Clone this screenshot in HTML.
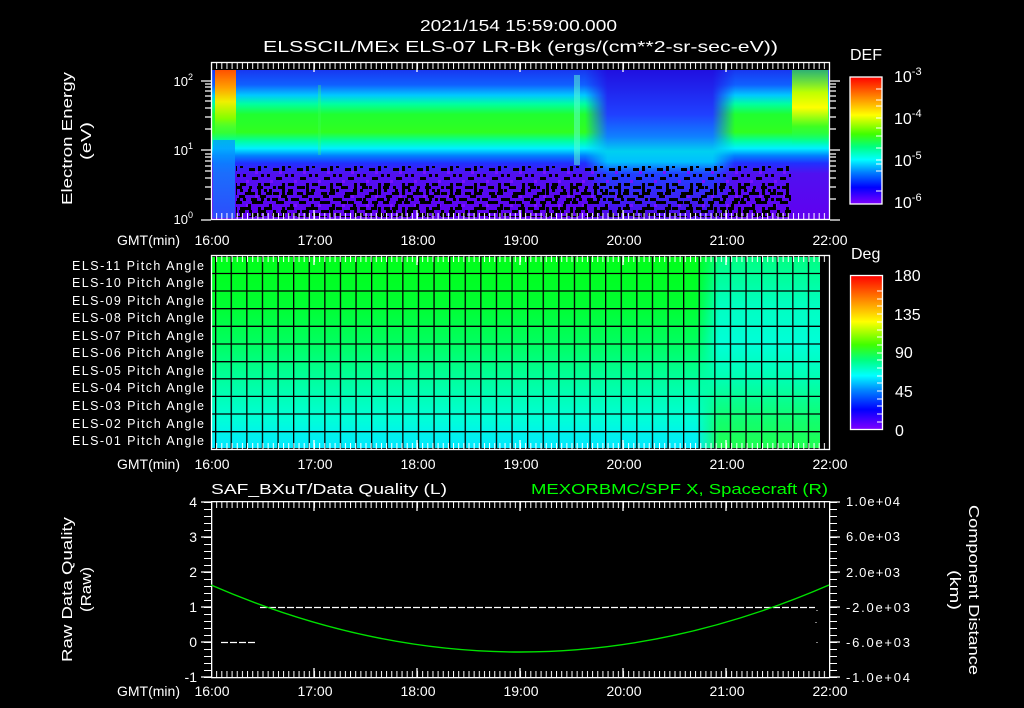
<!DOCTYPE html>
<html><head><meta charset="utf-8"><style>
html,body{margin:0;padding:0;background:#000;width:1024px;height:708px;overflow:hidden}
svg{display:block}
text{font-family:"Liberation Sans",sans-serif;fill:#fff}
</style></head><body>
<svg width="1024" height="708" viewBox="0 0 1024 708" xmlns="http://www.w3.org/2000/svg">
<defs>
<linearGradient id="cb" x1="0" y1="0" x2="0" y2="1">
<stop offset="0" stop-color="#ff0000"/><stop offset=".15" stop-color="#ff8000"/><stop offset=".3" stop-color="#ffff00"/><stop offset=".45" stop-color="#40ff00"/><stop offset=".55" stop-color="#00ff80"/><stop offset=".65" stop-color="#00ffff"/><stop offset=".75" stop-color="#0080ff"/><stop offset=".87" stop-color="#0000ff"/><stop offset="1" stop-color="#8000ff"/></linearGradient>
<linearGradient id="spec" x1="0" y1="70" x2="0" y2="218" gradientUnits="userSpaceOnUse">
<stop offset="0" stop-color="#1838f0"/><stop offset=".1" stop-color="#1060ff"/><stop offset=".17" stop-color="#00c8ff"/><stop offset=".23" stop-color="#00ffa0"/><stop offset=".3" stop-color="#20ff30"/><stop offset=".42" stop-color="#30ff20"/><stop offset=".48" stop-color="#00ffa0"/><stop offset=".53" stop-color="#00f0ff"/><stop offset=".58" stop-color="#0080ff"/><stop offset=".63" stop-color="#2030ff"/><stop offset=".7" stop-color="#5010f0"/><stop offset="1" stop-color="#6000f0"/></linearGradient>
<linearGradient id="weak" x1="0" y1="70" x2="0" y2="218" gradientUnits="userSpaceOnUse">
<stop offset="0" stop-color="#2010e0"/><stop offset=".3" stop-color="#2040ff"/><stop offset=".45" stop-color="#1080ff"/><stop offset=".55" stop-color="#00d0f0"/><stop offset=".62" stop-color="#00c0ff"/><stop offset=".7" stop-color="#2040ff"/><stop offset="1" stop-color="#5008e8"/></linearGradient>
<linearGradient id="hx" x1="0" y1="0" x2="1" y2="0"><stop offset="0" stop-color="#fff" stop-opacity="0"/><stop offset=".15" stop-color="#fff" stop-opacity="1"/><stop offset=".85" stop-color="#fff" stop-opacity="1"/><stop offset="1" stop-color="#fff" stop-opacity="0"/></linearGradient>
<mask id="wm"><rect x="585" y="70" width="150" height="150" fill="url(#hx)"/></mask>
<linearGradient id="hot" x1="0" y1="70" x2="0" y2="140" gradientUnits="userSpaceOnUse">
<stop offset="0" stop-color="#ff5000"/><stop offset=".25" stop-color="#ffa000"/><stop offset=".45" stop-color="#f0f000"/><stop offset=".7" stop-color="#80ff00"/><stop offset="1" stop-color="#20ff80" stop-opacity="0"/></linearGradient>
<linearGradient id="rhot" x1="0" y1="70" x2="0" y2="145" gradientUnits="userSpaceOnUse">
<stop offset="0" stop-color="#40ff20" stop-opacity=".6"/><stop offset=".3" stop-color="#c0ff00"/><stop offset=".5" stop-color="#ffff00"/><stop offset=".75" stop-color="#40ff20"/><stop offset="1" stop-color="#00ff90" stop-opacity="0"/></linearGradient>
<linearGradient id="lstrip" x1="0" y1="140" x2="0" y2="218" gradientUnits="userSpaceOnUse"><stop offset="0" stop-color="#00a0ff"/><stop offset="1" stop-color="#2060ff"/></linearGradient>
<pattern id="speck" width="24" height="24" patternUnits="userSpaceOnUse" x="0" y="165">
<g fill="#000"><rect x="0" y="0" width="3" height="3"/><rect x="9" y="3" width="6" height="3"/><rect x="18" y="0" width="3" height="6"/><rect x="3" y="9" width="3" height="3"/><rect x="12" y="12" width="6" height="3"/><rect x="21" y="9" width="3" height="3"/><rect x="0" y="18" width="6" height="3"/><rect x="9" y="21" width="3" height="3"/><rect x="18" y="18" width="3" height="6"/></g>
<g fill="#7a10ff"><rect x="6" y="15" width="3" height="3"/><rect x="15" y="6" width="3" height="3"/></g>
</pattern>
<pattern id="speck2" width="21" height="15" patternUnits="userSpaceOnUse" x="5" y="186">
<g fill="#000"><rect x="0" y="0" width="6" height="3"/><rect x="12" y="3" width="3" height="6"/><rect x="3" y="9" width="6" height="3"/><rect x="15" y="12" width="6" height="3"/><rect x="9" y="6" width="3" height="3"/></g>
</pattern>
<pattern id="tk" width="5.15" height="20" patternUnits="userSpaceOnUse" x="211" y="0"><rect x="0" y="0" width="1" height="20" fill="#fff"/></pattern>
<pattern id="tky" width="20" height="7" patternUnits="userSpaceOnUse" x="0" y="502"><rect x="0" y="0" width="20" height="1" fill="#fff"/></pattern>
<pattern id="vgrid" width="15.6" height="300" patternUnits="userSpaceOnUse" x="215" y="0"><rect x="0" y="0" width="1.3" height="300" fill="#000"/></pattern>
</defs>

<text x="420" y="31" font-size="16" textLength="197" lengthAdjust="spacingAndGlyphs">2021/154 15:59:00.000</text>
<text x="263" y="52" font-size="16" textLength="515" lengthAdjust="spacingAndGlyphs">ELSSCIL/MEx ELS-07 LR-Bk  (ergs/(cm**2-sr-sec-eV))</text>

<rect x="212" y="70" width="617" height="149" fill="url(#spec)"/>
<rect x="585" y="70" width="150" height="149" fill="url(#weak)" mask="url(#wm)"/>
<rect x="574" y="75" width="6" height="90" fill="#60ffd0" opacity=".5"/>
<rect x="318" y="85" width="3" height="70" fill="#40ff60" opacity=".3"/>
<rect x="213" y="140" width="22" height="78" fill="url(#lstrip)" opacity=".8"/>
<rect x="215" y="70" width="21" height="72" fill="url(#hot)"/>
<rect x="792" y="70" width="36" height="75" fill="url(#rhot)"/>
<rect x="236" y="166" width="555" height="51" fill="url(#speck)"/>
<rect x="236" y="186" width="555" height="31" fill="url(#speck2)"/>
<rect x="211.5" y="62.5" width="618" height="157" fill="none" stroke="#fff" stroke-width="1.3"/>
<rect x="211" y="63" width="618" height="6" fill="url(#tk)"/>
<rect x="211" y="213" width="618" height="6" fill="url(#tk)"/>
<g stroke="#fff" stroke-width="1.3">
<path d="M314 63v9M417 63v9M520 63v9M623 63v9M726 63v9M314 219v-9M417 219v-9M520 219v-9M623 219v-9M726 219v-9"/>
<path d="M201 81h10M201 150h10M201 220h10M830 81h10M830 150h10M830 220h10"/>
<path d="M205 199h6M205 187h6M205 178h6M205 171h6M205 166h6M205 161h6M205 157h6M205 154h6M205 129h6M205 117h6M205 108h6M205 101h6M205 96h6M205 91h6M205 87h6M205 84h6"/>
<path d="M830 199h6M830 187h6M830 178h6M830 171h6M830 166h6M830 161h6M830 157h6M830 154h6M830 129h6M830 117h6M830 108h6M830 101h6M830 96h6M830 91h6M830 87h6M830 84h6"/>
</g>
<g font-size="13" text-anchor="end">
<text x="193" y="86">10<tspan font-size="9" dy="-6">2</tspan></text>
<text x="193" y="155">10<tspan font-size="9" dy="-6">1</tspan></text>
<text x="193" y="224">10<tspan font-size="9" dy="-6">0</tspan></text>
</g>
<text transform="translate(72,205) rotate(-90)" font-size="15" textLength="133" lengthAdjust="spacingAndGlyphs">Electron Energy</text>
<text transform="translate(91,160) rotate(-90)" font-size="15" textLength="38" lengthAdjust="spacingAndGlyphs">(eV)</text>
<g font-size="14">
<text x="117" y="245" textLength="63">GMT(min)</text>
<g text-anchor="middle"><text x="212" y="245">16:00</text><text x="315" y="245">17:00</text><text x="418" y="245">18:00</text><text x="521" y="245">19:00</text><text x="624" y="245">20:00</text><text x="727" y="245">21:00</text><text x="830" y="245">22:00</text></g>
</g>
<text x="850" y="60" font-size="16">DEF</text>
<rect x="850" y="77" width="32" height="127" fill="url(#cb)" stroke="#fff" stroke-width="1.3"/>
<g stroke="#fff" stroke-width="1"><path d="M876 89h6M876 100h6M876 106h6M876 118h6M876 128h6M876 136h6M876 148h6M876 160h6M876 164h6M876 171h6M876 191h6"/></g>
<g font-size="16">
<text x="894" y="82">10<tspan font-size="11" dy="-7">-3</tspan></text>
<text x="894" y="124">10<tspan font-size="11" dy="-7">-4</tspan></text>
<text x="894" y="166">10<tspan font-size="11" dy="-7">-5</tspan></text>
<text x="894" y="208">10<tspan font-size="11" dy="-7">-6</tspan></text>
</g>

<linearGradient id="lft" x1="0" y1="257" x2="0" y2="448" gradientUnits="userSpaceOnUse">
<stop offset="0" stop-color="#00ff18"/><stop offset=".25" stop-color="#00ff30"/><stop offset=".45" stop-color="#00ff60"/><stop offset=".65" stop-color="#00ffa0"/><stop offset=".85" stop-color="#00ffd8"/><stop offset="1" stop-color="#00e8ff"/></linearGradient>
<linearGradient id="rgt" x1="0" y1="257" x2="0" y2="448" gradientUnits="userSpaceOnUse">
<stop offset="0" stop-color="#00ff80"/><stop offset=".25" stop-color="#00ffc0"/><stop offset=".45" stop-color="#00ffd8"/><stop offset=".65" stop-color="#00ffb0"/><stop offset=".85" stop-color="#10ff70"/><stop offset="1" stop-color="#20ff50"/></linearGradient>
<linearGradient id="hx2" x1="0" y1="0" x2="1" y2="0"><stop offset="0" stop-color="#fff" stop-opacity="0"/><stop offset="1" stop-color="#fff" stop-opacity="1"/></linearGradient>
<mask id="rm"><rect x="696" y="257" width="24" height="191" fill="url(#hx2)"/><rect x="720" y="257" width="100" height="191" fill="#fff"/></mask>
<rect x="212" y="257" width="608" height="191" fill="url(#lft)"/>
<rect x="696" y="257" width="124" height="191" fill="url(#rgt)" mask="url(#rm)"/>
<rect x="212" y="257" width="608" height="191" fill="url(#vgrid)"/>
<g stroke="#000" stroke-width="1.3"><path d="M212 273.5h608M212 291h608M212 308.7h608M212 326.3h608M212 344h608M212 361.7h608M212 378.8h608M212 396.4h608M212 414h608M212 431.7h608"/></g>
<rect x="211.5" y="255.5" width="618" height="194" fill="none" stroke="#fff" stroke-width="1.3"/>
<rect x="211" y="256" width="618" height="6" fill="url(#tk)"/>
<rect x="211" y="443" width="618" height="6" fill="url(#tk)"/>
<g stroke="#fff" stroke-width="1.3"><path d="M314 256v9M417 256v9M520 256v9M623 256v9M726 256v9M314 449v-9M417 449v-9M520 449v-9M623 449v-9M726 449v-9"/></g>
<g font-size="12.5">
<text x="72" y="270" textLength="132">ELS-11 Pitch Angle</text><text x="72" y="287" textLength="132">ELS-10 Pitch Angle</text><text x="72" y="305" textLength="132">ELS-09 Pitch Angle</text><text x="72" y="322" textLength="132">ELS-08 Pitch Angle</text><text x="72" y="340" textLength="132">ELS-07 Pitch Angle</text><text x="72" y="357" textLength="132">ELS-06 Pitch Angle</text><text x="72" y="375" textLength="132">ELS-05 Pitch Angle</text><text x="72" y="392" textLength="132">ELS-04 Pitch Angle</text><text x="72" y="410" textLength="132">ELS-03 Pitch Angle</text><text x="72" y="428" textLength="132">ELS-02 Pitch Angle</text><text x="72" y="445" textLength="132">ELS-01 Pitch Angle</text>
</g>
<g font-size="14">
<text x="117" y="469" textLength="63">GMT(min)</text>
<g text-anchor="middle"><text x="212" y="469">16:00</text><text x="315" y="469">17:00</text><text x="418" y="469">18:00</text><text x="521" y="469">19:00</text><text x="624" y="469">20:00</text><text x="727" y="469">21:00</text><text x="830" y="469">22:00</text></g>
</g>
<text x="851" y="259" font-size="16">Deg</text>
<rect x="850.5" y="275.5" width="32" height="154" fill="url(#cb)" stroke="#fff" stroke-width="1.3"/>
<g stroke="#fff" stroke-width="1"><path d="M877 291h5M877 299h5M877 306h5M877 314h5M877 322h5M877 330h5M877 337h5M877 345h5M877 353h5M877 360h5M877 368h5M877 376h5M877 383h5M877 391h5M877 399h5M877 406h5M877 414h5M877 422h5"/></g>
<g font-size="16"><text x="894" y="281">180</text><text x="894" y="320">135</text><text x="895" y="358">90</text><text x="895" y="397">45</text><text x="895" y="436">0</text></g>

<text x="211" y="494" font-size="15" textLength="236" lengthAdjust="spacingAndGlyphs">SAF_BXuT/Data Quality (L)</text>
<text x="531" y="494" font-size="15" textLength="297" lengthAdjust="spacingAndGlyphs" style="fill:#00ff00">MEXORBMC/SPF X, Spacecraft (R)</text>
<rect x="211" y="501" width="1.3" height="177" fill="#fff"/>
<rect x="829" y="501" width="1.3" height="177" fill="#fff"/>
<rect x="211" y="501" width="619" height="1.3" fill="#fff"/>
<rect x="211" y="677" width="619" height="1.3" fill="#fff"/>
<rect x="211" y="502" width="618" height="6" fill="url(#tk)"/>
<rect x="211" y="671" width="618" height="6" fill="url(#tk)"/>
<rect x="204" y="502" width="7" height="176" fill="url(#tky)"/>
<rect x="830" y="502" width="7" height="176" fill="url(#tky)"/>
<g stroke="#fff" stroke-width="1.3"><path d="M314 502v9M417 502v9M520 502v9M623 502v9M726 502v9M314 677v-9M417 677v-9M520 677v-9M623 677v-9M726 677v-9"/>
<path d="M201 502h10M201 537h10M201 572h10M201 607h10M201 642h10M201 677h10M830 502h10M830 537h10M830 572h10M830 607h10M830 642h10M830 677h10"/></g>
<g font-size="14" text-anchor="end"><text x="197" y="507">4</text><text x="197" y="542">3</text><text x="197" y="577">2</text><text x="197" y="612">1</text><text x="197" y="647">0</text><text x="197" y="682">-1</text></g>
<g font-size="13"><text x="846" y="506" textLength="54">1.0e+04</text><text x="846" y="541" textLength="54">6.0e+03</text><text x="846" y="577" textLength="54">2.0e+03</text><text x="846" y="612" textLength="64">-2.0e+03</text><text x="846" y="647" textLength="64">-6.0e+03</text><text x="846" y="682" textLength="64">-1.0e+04</text></g>
<path d="M221 642.5h36M260 607.5h555" stroke="#fff" stroke-width="1.3" stroke-dasharray="7 2"/>
<path d="M817 610v1M816 622v1M817 642v1" stroke="#fff"/>
<path d="M211 585 Q520 719 829 585" fill="none" stroke="#00e000" stroke-width="1.4"/>
<text transform="translate(72,662) rotate(-90)" font-size="15" textLength="145" lengthAdjust="spacingAndGlyphs">Raw Data Quality</text>
<text transform="translate(91,612) rotate(-90)" font-size="15" textLength="45" lengthAdjust="spacingAndGlyphs">(Raw)</text>
<text transform="translate(969,505) rotate(90)" font-size="15" textLength="170" lengthAdjust="spacingAndGlyphs">Component Distance</text>
<text transform="translate(950,570) rotate(90)" font-size="15" textLength="40" lengthAdjust="spacingAndGlyphs">(km)</text>
<g font-size="14">
<text x="117" y="696" textLength="63">GMT(min)</text>
<g text-anchor="middle"><text x="212" y="696">16:00</text><text x="315" y="696">17:00</text><text x="418" y="696">18:00</text><text x="521" y="696">19:00</text><text x="624" y="696">20:00</text><text x="727" y="696">21:00</text><text x="830" y="696">22:00</text></g>
</g>
</svg>
</body></html>
